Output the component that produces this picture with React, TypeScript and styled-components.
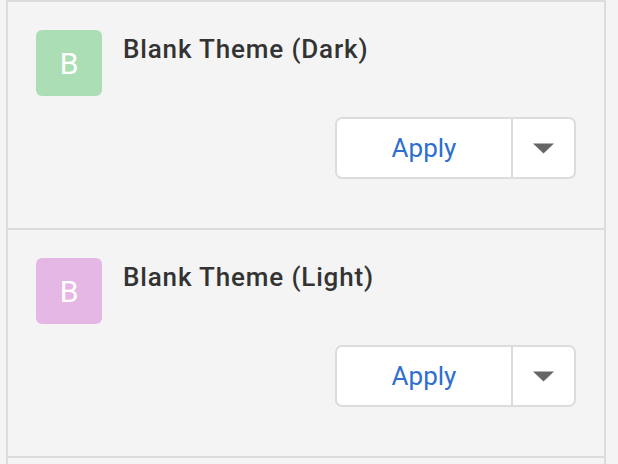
import React from "react";
import styled, { createGlobalStyle } from "styled-components";

const GlobalStyle = createGlobalStyle`
  html, body {
    margin: 0;
    padding: 0;
    background: #f4f4f4;
    font-family: Roboto, "Noto Sans", "Liberation Sans", sans-serif;
  }
  * { box-sizing: border-box; }
`;

const List = styled.div`
  margin-left: 6px;
  width: 600px;
  min-height: 100vh;
  border: 2px solid #dcdcdc;
  border-bottom: none;
  background: #f4f4f4;
`;

const Card = styled.div`
  height: 228px;
  padding: 28px 28px 0 28px;
  border-bottom: 2px solid #dcdcdc;
  display: flex;
  flex-direction: column;
`;

const Header = styled.div`
  display: flex;
  align-items: flex-start;
  gap: 21px;
`;

const Avatar = styled.div<{ $color: string }>`
  width: 66px;
  height: 66px;
  flex: none;
  border-radius: 6px;
  background: ${(p) => p.$color};
  color: #ffffff;
  font-size: 30px;
  font-weight: 400;
  display: flex;
  align-items: center;
  justify-content: center;
`;

const Title = styled.div`
  margin-top: 4px;
  font-size: 26px;
  line-height: 30px;
  font-weight: 500;
  letter-spacing: 0.85px;
  color: #333333;
`;

const Actions = styled.div`
  margin-top: 21px;
  display: flex;
  justify-content: flex-end;
`;

const SplitButton = styled.div`
  display: flex;
  height: 62px;
  width: 241px;
  border: 2px solid #dcdcdc;
  border-radius: 7px;
  background: #ffffff;
  overflow: hidden;
`;

const ApplyButton = styled.button`
  flex: none;
  width: 176px;
  border: none;
  border-right: 2px solid #dcdcdc;
  background: transparent;
  font-family: inherit;
  font-size: 26px;
  font-weight: 400;
  color: #2e6fd0;
  padding: 0;
  cursor: pointer;
`;

const CaretButton = styled.button`
  flex: 1;
  border: none;
  background: transparent;
  padding: 0;
  display: flex;
  align-items: center;
  justify-content: center;
  cursor: pointer;
`;

const Caret = () => (
  <svg width="21" height="11" viewBox="0 0 21 11">
    <path d="M0 0.5 L21 0.5 L10.5 10.5 Z" fill="#666666" />
  </svg>
);

const themes = [
  { name: "Blank Theme (Dark)", color: "#abdeb5" },
  { name: "Blank Theme (Light)", color: "#e5b7e5" },
];

export default function App() {
  return (
    <>
      <GlobalStyle />
      <List>
        {themes.map((t) => (
          <Card key={t.name}>
            <Header>
              <Avatar $color={t.color}>B</Avatar>
              <Title>{t.name}</Title>
            </Header>
            <Actions>
              <SplitButton>
                <ApplyButton>Apply</ApplyButton>
                <CaretButton aria-label="More options">
                  <Caret />
                </CaretButton>
              </SplitButton>
            </Actions>
          </Card>
        ))}
      </List>
    </>
  );
}
